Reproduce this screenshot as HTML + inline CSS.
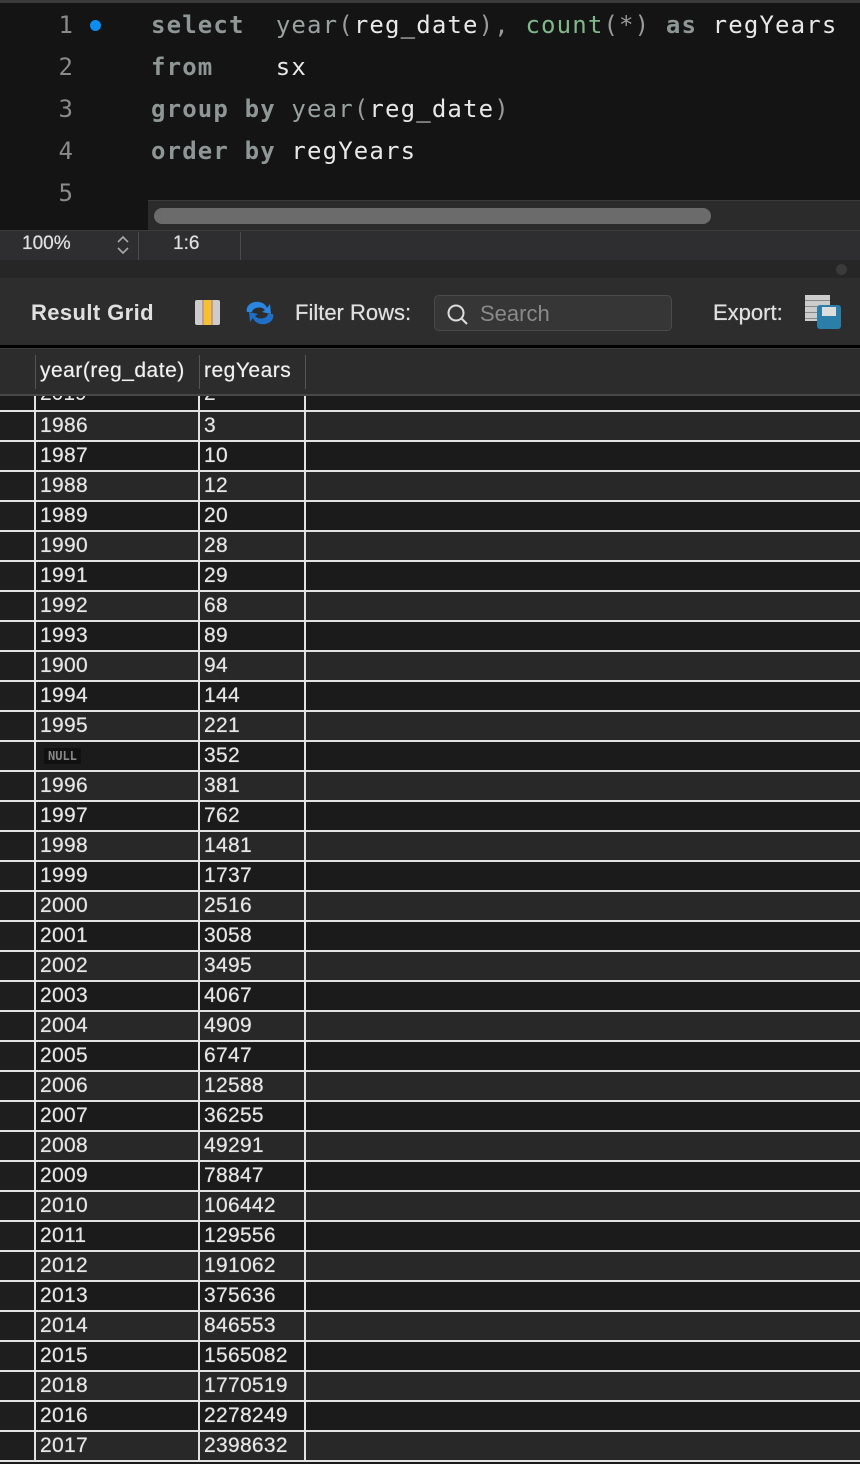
<!DOCTYPE html>
<html><head><style>
*{margin:0;padding:0;box-sizing:border-box}
body{width:860px;height:1464px;background:#1b1b1b;position:relative;overflow:hidden;font-family:"Liberation Sans",sans-serif}
.abs{position:absolute}
.code{font-family:"DejaVu Sans Mono","Liberation Mono",monospace;font-size:24px;letter-spacing:1.15px;color:#e8e8e8;white-space:pre;left:151px}
.ln{font-family:"DejaVu Sans Mono",monospace;font-size:24px;color:#8a8a8a;right:787px;text-align:right}
.kw{color:#8e9696;font-weight:bold}.fn{color:#9aa1a1}.gr{color:#7fb98a}.p{color:#9a9a9a}
.row{position:absolute;left:0;width:860px;height:30px;border-top:2px solid #e2e2e2;font-size:21px;letter-spacing:0.3px;color:#e6e6e6;text-shadow:0 0 0.6px #e6e6e6}
.row span{position:absolute;top:2px}
.row .a{left:40px}.row .b{left:204px}
.row .lc{position:absolute;left:0;top:0;width:35px;height:28px;background:#1e1e1e}
.v{position:absolute;top:396px;width:2px;height:1066px;background:#e2e2e2}
.t{text-shadow:0 0 0.6px #e0e0e0}
</style></head><body>
<div class="abs" style="left:0;top:0;width:860px;height:230px;background:#141414;border-top:3px solid #3a3a3a"></div>
<div class="abs ln" style="top:11px">1</div>
<div class="abs" style="left:90px;top:20px;width:11px;height:11px;border-radius:50%;background:#0a8cf0"></div>
<div class="abs ln" style="top:53px">2</div>
<div class="abs ln" style="top:95px">3</div>
<div class="abs ln" style="top:137px">4</div>
<div class="abs ln" style="top:179px">5</div>
<div class="abs code" style="top:11px"><span class="kw">select</span>  <span class="fn">year</span><span class="p">(</span>reg_date<span class="p">),</span> <span class="gr">count</span><span class="p">(*)</span> <span class="kw">as</span> regYears</div>
<div class="abs code" style="top:53px"><span class="kw">from</span>    sx</div>
<div class="abs code" style="top:95px"><span class="kw">group by</span> <span class="fn">year</span><span class="p">(</span>reg_date<span class="p">)</span></div>
<div class="abs code" style="top:137px"><span class="kw">order by</span> regYears</div>
<div class="abs" style="left:148px;top:200px;width:712px;height:30px;background:#2b2b2b;border-top:1px solid #3a3a3a"></div>
<div class="abs" style="left:154px;top:208px;width:557px;height:16px;border-radius:8px;background:#6b6b6b"></div>
<div class="abs" style="left:0;top:230px;width:860px;height:30px;background:#2e2e30;border-top:1px solid #3c3c3c"></div>
<div class="abs t" style="left:22px;top:233px;font-size:19px;color:#e0e0e0">100%</div>
<svg class="abs" style="left:114px;top:233px" width="18" height="24"><path d="M4 9 L9 4 L14 9 M4 15 L9 20 L14 15" fill="none" stroke="#aaa" stroke-width="1.6"/></svg>
<div class="abs" style="left:138px;top:232px;width:1px;height:28px;background:#4a4a4a"></div>
<div class="abs t" style="left:173px;top:233px;font-size:19px;color:#e0e0e0">1:6</div>
<div class="abs" style="left:240px;top:232px;width:1px;height:28px;background:#4a4a4a"></div>
<div class="abs" style="left:0;top:260px;width:860px;height:18px;background:#262626"></div>
<div class="abs" style="left:836px;top:264px;width:11px;height:11px;border-radius:50%;background:#3a3a3a"></div>
<div class="abs" style="left:0;top:278px;width:860px;height:68px;background:#2d2d2d"></div>
<div class="abs" style="left:31px;top:300px;font-size:22px;letter-spacing:0.4px;font-weight:bold;color:#e0e0e0">Result Grid</div>
<div class="abs" style="left:195px;top:300px;width:25px;height:25px;background:#ccc;border-radius:2px"><div style="position:absolute;left:7px;top:0;width:11px;height:25px;background:#f2c230;border-left:2px solid #c98;border-right:2px solid #c98"></div></div>
<svg class="abs" style="left:244px;top:300px" width="32" height="26"><path d="M3 12 A10 8 0 0 1 23 8 L26 4 L27 14 L18 12 L21 10 A7 5 0 0 0 8 12 Z" fill="#2a86e0"/><path d="M29 14 A10 8 0 0 1 9 18 L6 22 L5 12 L14 14 L11 16 A7 5 0 0 0 24 14 Z" fill="#1f6fc8"/></svg>
<div class="abs t" style="left:295px;top:300px;font-size:22px;color:#e0e0e0">Filter Rows:</div>
<div class="abs" style="left:434px;top:295px;width:238px;height:36px;border:1px solid #4a4a4a;border-radius:5px;background:#363636"></div>
<svg class="abs" style="left:446px;top:303px" width="24" height="24"><circle cx="10" cy="10" r="7.5" fill="none" stroke="#ddd" stroke-width="2"/><line x1="15.5" y1="15.5" x2="21" y2="21" stroke="#ddd" stroke-width="2"/></svg>
<div class="abs" style="left:480px;top:301px;font-size:22px;color:#8a8a8a">Search</div>
<div class="abs t" style="left:713px;top:300px;font-size:22px;color:#e0e0e0">Export:</div>
<div class="abs" style="left:805px;top:295px;width:25px;height:26px;background:repeating-linear-gradient(#ccc 0 5px,#888 5px 6px)"></div>
<div class="abs" style="left:817px;top:305px;width:24px;height:24px;background:#2b7ea8;border-radius:3px"><div style="position:absolute;left:5px;top:2px;width:14px;height:9px;background:#ddd"></div></div>
<div class="abs" style="left:0;top:345px;width:860px;height:3px;background:#000"></div>
<div class="abs" style="left:0;top:348px;width:860px;height:48px;background:#2c2c2c;border-top:1px solid #3c3c3c;border-bottom:2px solid #474747"></div>
<div class="abs" style="left:35px;top:355px;width:1px;height:34px;background:#555"></div>
<div class="abs" style="left:199px;top:355px;width:1px;height:34px;background:#555"></div>
<div class="abs" style="left:305px;top:355px;width:1px;height:34px;background:#555"></div>
<div class="abs t" style="left:40px;top:359px;font-size:21px;letter-spacing:0.5px;color:#f0f0f0;font-weight:500">year(reg_date)</div>
<div class="abs t" style="left:204px;top:359px;font-size:21px;letter-spacing:0.5px;color:#f0f0f0">regYears</div>
<div class="abs" style="left:0;top:396px;width:860px;height:15px;overflow:hidden;font-size:21px;color:#e6e6e6"><span style="position:absolute;left:40px;top:-14px">2019</span><span style="position:absolute;left:204px;top:-14px">2</span></div>
<div id="rows"></div>
<div class="v" style="left:34px"></div>
<div class="v" style="left:198px"></div>
<div class="v" style="left:304px"></div>
<div class="abs" style="left:0;top:1460px;width:860px;height:2px;background:#e2e2e2"></div>
<script>
var d=[["1986",3],["1987",10],["1988",12],["1989",20],["1990",28],["1991",29],["1992",68],["1993",89],["1900",94],["1994",144],["1995",221],["NULL",352],["1996",381],["1997",762],["1998",1481],["1999",1737],["2000",2516],["2001",3058],["2002",3495],["2003",4067],["2004",4909],["2005",6747],["2006",12588],["2007",36255],["2008",49291],["2009",78847],["2010",106442],["2011",129556],["2012",191062],["2013",375636],["2014",846553],["2015",1565082],["2018",1770519],["2016",2278249],["2017",2398632]];
var h="";d.forEach(function(r,i){var bg=i%2?"#1b1b1b":"#282828";var a=r[0]=="NULL"?'<span class="a" style="top:6px;left:44px;font-size:12px;font-weight:bold;color:#888;background:#111;padding:1px 4px;text-shadow:none;letter-spacing:0;font-family:DejaVu Sans Mono,monospace">NULL</span>':'<span class="a">'+r[0]+'</span>';
h+='<div class="row" style="top:'+(410+i*30)+'px;background:'+bg+'"><div class="lc"></div>'+a+'<span class="b">'+r[1]+'</span></div>';});
document.getElementById("rows").innerHTML=h;
</script>
</body></html>
